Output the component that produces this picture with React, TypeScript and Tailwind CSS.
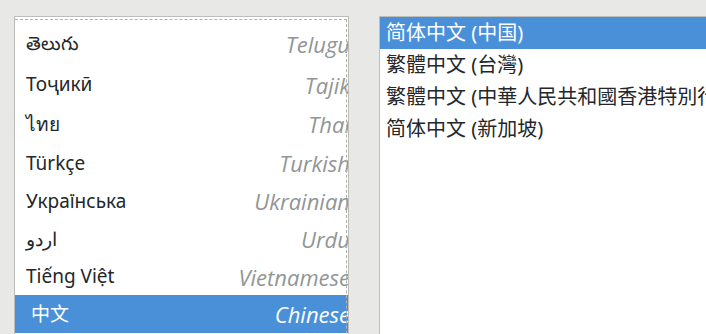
import React from 'react'

interface Lang {
  native: string
  english: string
  h: number
  rtl?: boolean
  selected?: boolean
  cjk?: boolean
}

const languages: Lang[] = [
  { native: 'తెలుగు', english: 'Telugu', h: 43 },
  { native: 'Тоҷикӣ', english: 'Tajik', h: 39 },
  { native: 'ไทย', english: 'Thai', h: 40 },
  { native: 'Türkçe', english: 'Turkish', h: 38 },
  { native: 'Українська', english: 'Ukrainian', h: 38 },
  { native: 'اردو', english: 'Urdu', h: 38, rtl: true },
  { native: 'Tiếng Việt', english: 'Vietnamese', h: 37 },
  { native: '中文', english: 'Chinese', h: 38, selected: true, cjk: true },
]

const locales = ['简体中文 (中国)', '繁體中文 (台灣)', '繁體中文 (中華人民共和國香港特別行政區)', '简体中文 (新加坡)']

const sans = "font-['Noto_Sans','Noto_Sans_CJK_SC',sans-serif]"

function LangRow({ lang }: { lang: Lang }) {
  return (
    <div
      className={`flex w-[335px] shrink-0 items-center justify-between pl-[11px] pr-0 ${lang.selected ? 'bg-[#4a90d9]' : ''}`}
      style={{ height: lang.h }}
    >
      <span
        dir={lang.rtl ? 'rtl' : undefined}
        className={`leading-none ${lang.cjk ? 'pl-[5px] text-[19px]' : 'text-[19px]'} ${lang.selected ? 'text-white' : 'text-[#232729]'}`}
      >
        {lang.native}
      </span>
      <span
        className={`font-['Open_Sans',sans-serif] text-[22px] italic leading-none ${lang.selected ? 'text-white' : 'text-[#929595]'}`}
      >
        {lang.english}
      </span>
    </div>
  )
}

export default function App() {
  return (
    <div className={`flex h-[334px] w-[706px] items-start gap-[30px] overflow-hidden bg-[#e8e8e7] pl-[14px] pt-[16px] ${sans}`}>
      {/* language list */}
      <div className="relative h-[330px] w-[335px] shrink-0 overflow-hidden border border-[#bdbdba] bg-white">
        <div className="flex flex-col pt-[5px]">
          {languages.map((lang) => (
            <LangRow key={lang.english} lang={lang} />
          ))}
        </div>
        {/* focus ring */}
        <div className="pointer-events-none absolute left-0 right-[1px] top-[2px] h-[400px] border-r border-t border-dashed border-[#b0b0ad]" />
      </div>

      {/* locale list */}
      <div className="h-[330px] flex-1 overflow-hidden border border-r-0 border-[#bdbdba] bg-white">
        {locales.map((loc, i) => (
          <div
            key={loc}
            className={`flex h-[32px] items-center whitespace-nowrap pl-[6px] text-[20px] ${
              i === 0 ? 'bg-[#4a90d9] text-white' : 'text-[#232729]'
            }`}
          >
            {loc}
          </div>
        ))}
      </div>
    </div>
  )
}
